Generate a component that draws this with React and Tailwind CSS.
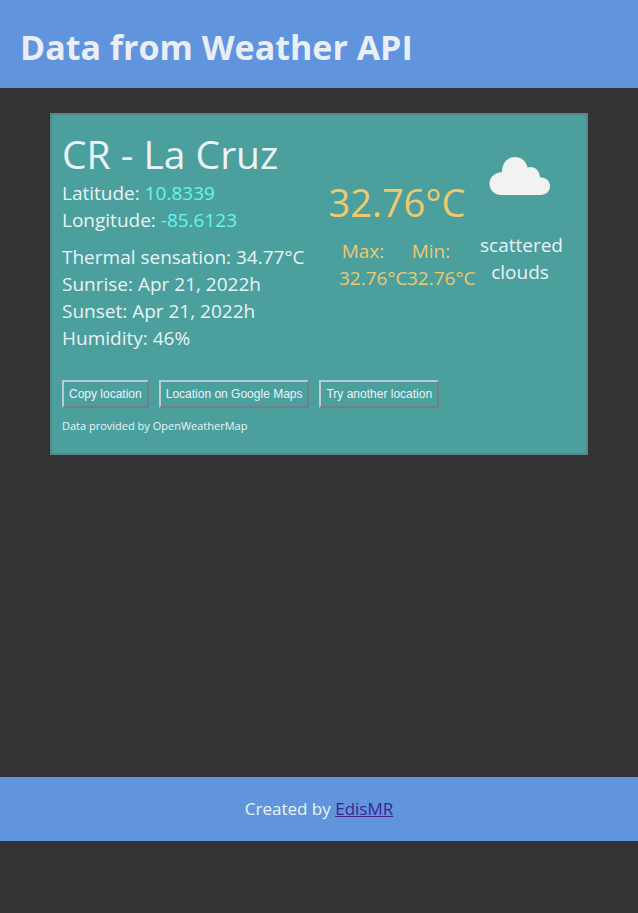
import React from "react";

const details = [
  "Thermal sensation: 34.77°C",
  "Sunrise: Apr 21, 2022h",
  "Sunset: Apr 21, 2022h",
  "Humidity: 46%",
];

const actions = ["Copy location", "Location on Google Maps", "Try another location"];

function CloudIcon() {
  return (
    <svg className="h-10 w-[62px]" viewBox="0 0 62 40" fill="#f2f2f2" aria-hidden="true">
      <path d="M12 39C5.400 39 .5 34 .5 27.500C.5 21.500 5.500 16.500 13 16C13 7 18.500 1 26 1C32 1 37 5 38.500 11.500C44.500 9.500 50.500 13.500 51 21.300C57 21.500 61 25 61 30C61 35.500 57 39 51.500 39Z" />
    </svg>
  );
}

function Range({ label, value }) {
  return (
    <p className="w-12 text-center">
      {label} <span className="block w-max">{value}</span>
    </p>
  );
}

export default function App() {
  return (
    <div className="flex min-h-screen flex-col bg-[#333234] pb-[72px] font-['Open_Sans','Noto_Sans',sans-serif] text-[19px] leading-[27px] text-[#e9f3f8]">
      <header className="bg-[#6094dd] px-5 pt-[23px] pb-[17px]">
        <h1 className="text-[34px] leading-[48px] font-bold text-[#e9eef8]">Data from Weather API</h1>
      </header>

      <main className="flex-1 px-[50px] pt-[25px] pb-6">
        <section className="border-2 border-[#558a88] bg-[#4ba09d] px-[10px] pt-[13px] pb-[19px]">
          <div className="flex">
            <div className="flex-1">
              <h2 className="text-[39px] leading-[52px]">CR - La Cruz</h2>
              <p>
                Latitude: <span className="text-[#66f6ee]">10.8339</span>
              </p>
              <p>
                Longitude: <span className="text-[#66f6ee]">-85.6123</span>
              </p>
              <div className="mt-[10px]">
                {details.map((line) => (
                  <p key={line}>{line}</p>
                ))}
              </div>
            </div>
            <div className="w-[134px] pt-12 text-[#edc96f]">
              <p className="flex justify-center text-[38px] leading-[52px] whitespace-nowrap">32.76°C</p>
              <div className="mt-[10px] flex justify-center gap-5">
                <Range label="Max:" value="32.76°C" />
                <Range label="Min:" value="32.76°C" />
              </div>
            </div>
            <div className="flex w-28 flex-col items-center pt-7">
              <CloudIcon />
              <p className="mt-9 w-20 text-center">scattered clouds</p>
            </div>
          </div>
          <div className="mt-7 flex flex-wrap gap-[10px]">
            {actions.map((action) => (
              <button
                key={action}
                type="button"
                className="h-7 border-2 border-t-[#b9cbd6] border-r-[#748089] border-b-[#748089] border-l-[#b9cbd6] px-[5px] font-['Liberation_Sans',Arial,sans-serif] text-xs"
              >
                {action}
              </button>
            ))}
          </div>
          <p className="mt-[10px] text-[11px] leading-4">Data provided by OpenWeatherMap</p>
        </section>
      </main>

      <footer className="bg-[#6094dd] py-[18px] text-center text-[17px] leading-7">
        Created by{" "}
        <a href="#" className="text-[#3e2492] underline">
          EdisMR
        </a>
      </footer>
    </div>
  );
}
